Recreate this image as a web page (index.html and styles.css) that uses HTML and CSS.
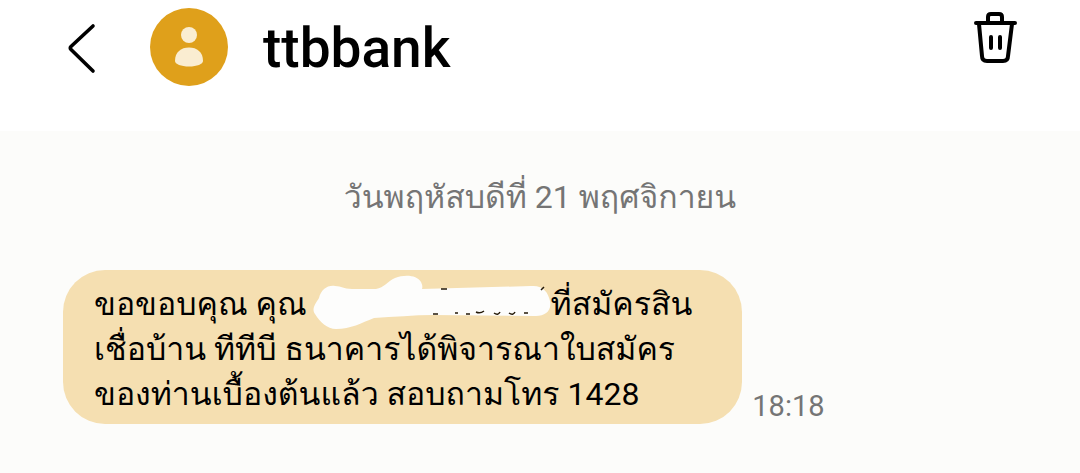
FILE: index.html
```html
<!DOCTYPE html>
<html lang="th">
<head>
<meta charset="utf-8">
<meta name="viewport" content="width=device-width, initial-scale=1">
<title>ttbbank</title>
<link rel="stylesheet" href="styles.css">
</head>
<body>
<header class="bar">
  <button class="icon-button back" type="button" aria-label="ย้อนกลับ">
    <svg width="32" height="56" viewBox="0 0 32 56" aria-hidden="true"><path d="M28 6 6 26.500Q4.500 28 6 29.500L28 51" fill="none" stroke="#000" stroke-width="3.600" stroke-linecap="round"/></svg>
  </button>
  <svg class="avatar" width="78" height="78" viewBox="0 0 78 78" aria-hidden="true">
    <circle cx="39" cy="39" r="39" fill="#dfa01b"/>
    <circle cx="39" cy="27" r="8" fill="#faedd1"/>
    <path d="M25 53C25 44 31 39.500 39 39.500S53 44 53 53C53 56 47 58.500 39 58.500S25 56 25 53Z" fill="#faedd1"/>
  </svg>
  <h1 class="title">ttbbank</h1>
  <button class="icon-button delete" type="button" aria-label="ลบ">
    <svg width="48" height="56" viewBox="0 0 48 56" fill="none" stroke="#000" stroke-width="4" stroke-linecap="round" stroke-linejoin="round" aria-hidden="true"><path d="M4 15H43M16 14V9Q16 6 19 6H27Q30 6 30 9V14M7 16 10 48Q10 53 15 53H31Q36 53 36 48L40 16M19 29V40M28 29V40"/></svg>
  </button>
</header>
<main class="thread">
  <p class="date">วันพฤหัสบดีที่ 21 พฤศจิกายน</p>
  <div class="message">
    <p class="bubble">ขอขอบคุณ คุณ <svg class="redaction" width="238" height="54" viewBox="0 0 238 54" role="img" aria-label="ปกปิดชื่อ"><path d="M2 39C-2 34 3 28 6 23C8 15 14 10 22 11C29 11 30 14 39 14L63 14C71 13 75 6 82 3C92-1 104 0 108 7Q110 11 109 14L218 11C230 10 235 17 237 26C239 36 232 41 223 41L120 40C101 40 80 42 61 43C48 48 38 54 23 54C14 54 7 47 2 39Z" fill="#fdfdfc"/><path d="M120 39H125M142 38H145M153 39H157M163 37Q167 39 171 36M181 38Q185 41 187 37M196 38Q200 41 202 37M211 38H215M128 14H134M228 15 231 12" fill="none" stroke="#251a09" stroke-width="1.500"/></svg>ที่สมัครสิน<br>เชื่อบ้าน ทีทีบี ธนาคารได้พิจารณาใบสมัคร<br>ของท่านเบื้องต้นแล้ว สอบถามโทร 1428</p>
    <time class="time" datetime="18:18">18:18</time>
  </div>
</main>
</body>
</html>
```
FILE: styles.css
```css
* { box-sizing: border-box; }
body {
  margin: 0;
  min-height: 100vh;
  background: #fcfcfa;
  color: #000;
  font-family: Roboto, Loma, "Noto Sans Thai Looped", sans-serif;
}
.bar {
  display: flex;
  align-items: flex-start;
  padding: 8px 60px 43px 65px;
  background: #fff;
}
.icon-button {
  display: flex;
  padding: 0;
  border: 0;
  background: none;
  cursor: pointer;
}
.back { margin-top: 12px; }
.avatar { margin-left: 53px; }
.title {
  flex: 1;
  margin: 0 0 0 35px;
  font-size: 55px;
  line-height: 80px;
  font-weight: 500;
}
.thread { padding: 42px 63px 48px; }
.date {
  margin: 0;
  font-size: 32px;
  line-height: 48px;
  text-align: center;
  color: #757575;
}
.message {
  display: flex;
  align-items: flex-end;
  gap: 10px;
  margin-top: 49px;
}
.bubble {
  margin: 0;
  padding: 12px 50px 7px 31px;
  border-radius: 42px;
  background: #f5dfb1;
  font-size: 32px;
  line-height: 45px;
  white-space: nowrap;
}
.redaction {
  margin: -20px 0 -10px -2px;
  vertical-align: -4px;
}
.time {
  font-size: 29px;
  line-height: 36px;
  color: #757575;
}
```
